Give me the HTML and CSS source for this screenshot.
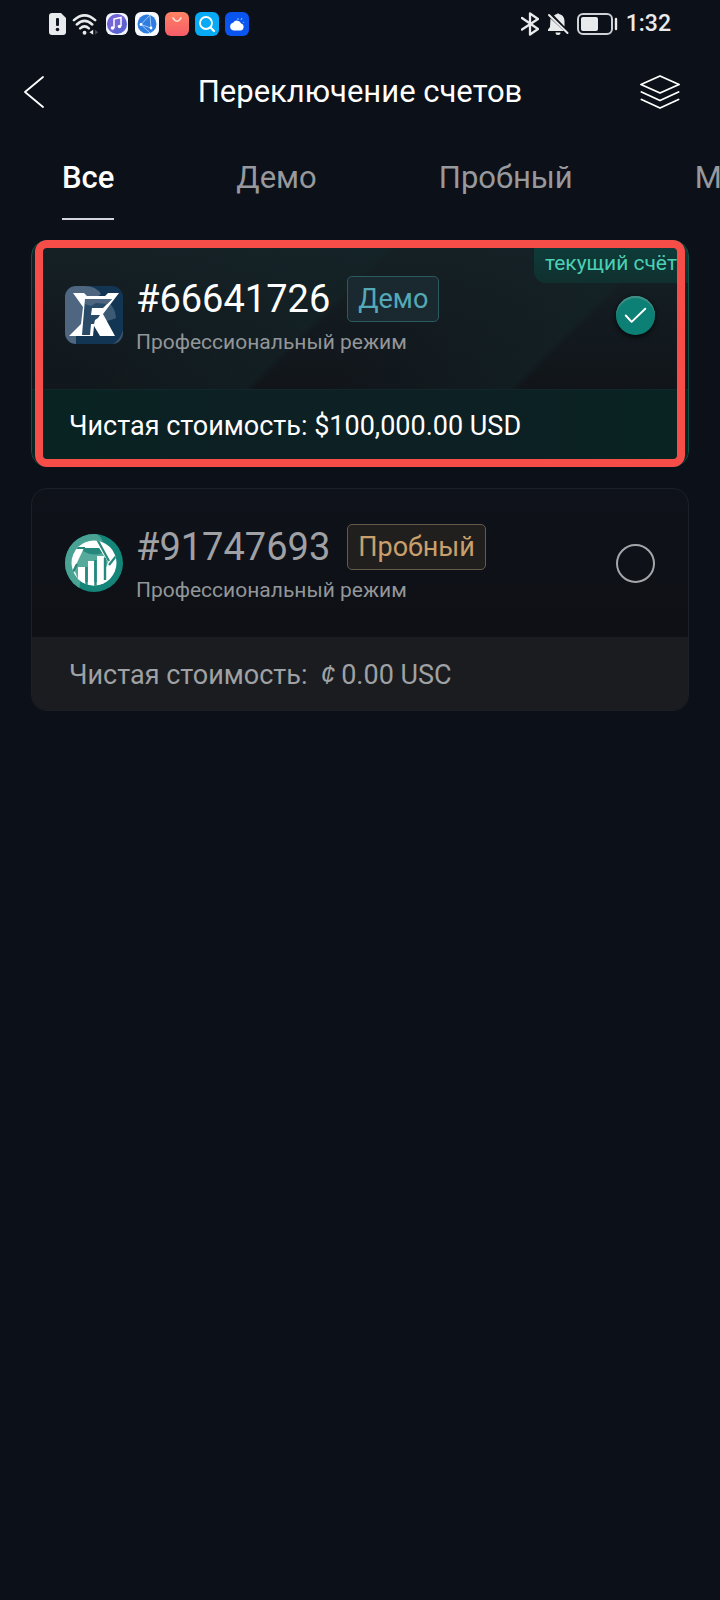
FILE: index.html
```html
<!DOCTYPE html>
<html lang="ru">
<head>
<meta charset="utf-8">
<meta name="viewport" content="width=device-width, initial-scale=1">
<title>Переключение счетов</title>
<link rel="stylesheet" href="styles.css">
</head>
<body>
<div class="status">
  <div class="status-apps">
    <svg width="17" height="22" viewBox="0 0 17 22"><path d="M3 0h9l5 5v14a3 3 0 0 1-3 3H3a3 3 0 0 1-3-3V3a3 3 0 0 1 3-3z" fill="#e9eaec"/><rect x="7" y="5" width="3" height="8" rx="1" fill="#111520"/><circle cx="8.500" cy="16.500" r="1.800" fill="#111520"/></svg>
    <svg class="wifi" width="27" height="23" viewBox="0 0 28 23" fill="none" stroke="#e9eaec" stroke-width="2.600" stroke-linecap="round"><path d="M2 7Q13-3 24 7M5 11.500q8-7.500 16 0M8.500 15.500q4.500-4 9 0"/><circle cx="13" cy="20" r="2" fill="#e9eaec" stroke="none"/><path d="M22 17v5l-4-2.500z" fill="#e9eaec" stroke="none"/><path d="M24 17v5l3-2.500z" fill="#4a4d55" stroke="none"/></svg>
    <svg width="24" height="24" viewBox="0 0 24 24"><rect x="1" y="1" width="22" height="22" rx="6" fill="#f3f4fc"/><circle cx="12" cy="12" r="10" fill="#5b63d3"/><path d="M3 9a10 10 0 0 1 17-3L8 20a9 9 0 0 1-5-11z" fill="#8068d8" opacity=".7"/><path d="M9 16V7l7-1.500V14" fill="none" stroke="#fff" stroke-width="1.500"/><circle cx="7.500" cy="16" r="1.800" fill="#fff"/><circle cx="14.500" cy="14.500" r="1.800" fill="#fff"/></svg>
    <svg width="24" height="24" viewBox="0 0 24 24"><rect width="24" height="24" rx="6" fill="#f7fbff"/><circle cx="12" cy="12" r="9.500" fill="#2f7de0"/><path d="M15 3 6 12.500 15 21M6 12.500l10 3.500M15 3l1 13" fill="none" stroke="#a5cdfb" stroke-width=".9"/><circle cx="6" cy="12.500" r="1.400" fill="#fff"/><circle cx="16" cy="16" r="1.400" fill="#fff"/></svg>
    <svg width="24" height="24" viewBox="0 0 24 24"><defs><linearGradient id="bag" x1="0" y1="0" x2="0" y2="1"><stop stop-color="#ff8363"/><stop offset="1" stop-color="#f65c68"/></linearGradient></defs><rect width="24" height="24" rx="6" fill="url(#bag)"/><path d="M8 6q4 6.500 8 0" fill="none" stroke="#ffe5dd" stroke-width="1.500" stroke-linecap="round"/></svg>
    <svg width="24" height="24" viewBox="0 0 24 24"><rect width="24" height="24" rx="6" fill="#08aaf5"/><circle cx="11" cy="11" r="6" fill="none" stroke="#fff" stroke-width="1.800"/><path d="m15.500 15.500 3.500 3.500" stroke="#fff" stroke-width="2.200" stroke-linecap="round"/></svg>
    <svg width="24" height="24" viewBox="0 0 24 24"><rect width="24" height="24" rx="6" fill="#0a54ef"/><path d="M8.500 18.500a4 4 0 0 1-.4-7.800 4.500 4.500 0 0 1 8 .8 3.600 3.600 0 0 1-.6 7z" fill="#fff"/><path d="M13 6v2M17 6l-1 2M19 10l-1 .5" stroke="#77b6ff" stroke-width="1.200"/></svg>
  </div>
  <div class="status-system">
    <svg width="18" height="24" viewBox="0 0 18 24" fill="none" stroke="#e9eaec" stroke-width="2.300" stroke-linejoin="round" stroke-linecap="round"><path d="M1 6l16 11-8 5.500V1.500L17 7 1 17.500"/></svg>
    <svg width="22" height="22" viewBox="0 0 22 22" fill="#e9eaec"><path d="M7 2.500A7 7 0 0 1 10 1q1-1.500 2 0c4 1 5.500 3.500 5.500 7.500v5zM3.500 5.500 17 18H1v-1.500l2-2.500z"/><path d="M8.500 19.500h5a2.500 2.500 0 0 1-5 0z"/><path d="m2 2 18.500 18" stroke="#e9eaec" stroke-width="2" stroke-linecap="round"/></svg>
    <svg width="41" height="22" viewBox="0 0 41 22"><rect x="1" y="1" width="34" height="20" rx="5" fill="none" stroke="#cfd1d4" stroke-width="2"/><rect x="4" y="4" width="17" height="14" rx="2" fill="#e9eaec"/><path d="M39 6v10" stroke="#e9eaec" stroke-width="2.400" stroke-linecap="round"/></svg>
    <span class="clock">1:32</span>
  </div>
</div>

<header class="topbar">
  <button class="icon-button" type="button" aria-label="Назад"><svg width="20" height="32" viewBox="0 0 20 32"><path d="M19 1 1 16l18 15" fill="none" stroke="#fff" stroke-width="1.800" stroke-linecap="round" stroke-linejoin="round"/></svg></button>
  <h1 class="title">Переключение счетов</h1>
  <button class="icon-button icon-button-end" type="button" aria-label="Счета"><svg width="40" height="34" viewBox="0 0 40 34" fill="none" stroke="#fff" stroke-width="1.900" stroke-linejoin="round" stroke-linecap="round"><path d="M1 9.500 20 1l19 8.500L20 18zM1.500 17 20 25.500 38.500 17M1.500 24.500 20 33l18.500-8.500"/></svg></button>
</header>

<nav class="tabs">
  <button class="tab tab-active" type="button">Все</button>
  <button class="tab" type="button">Демо</button>
  <button class="tab" type="button">Пробный</button>
  <button class="tab" type="button">М</button>
</nav>

<main class="accounts">
  <label class="card card-current" for="account-demo">
    <span class="card-head">
      <svg class="avatar" viewBox="0 0 58 58"><defs><clipPath id="tile"><rect width="58" height="58" rx="11"/></clipPath></defs><g clip-path="url(#tile)"><rect width="58" height="58" fill="#123553"/><path d="M0 0h20q11 0 16 8-13 8-15 24-1 13-10 18v8H0z" fill="#4e6680"/><path d="M20 12q24-3 30 14l1 6q-12 6-31 2z" fill="#3d5a75"/><path d="M58 44v14H48q7-4 10-14z" fill="#3b536b"/></g><path d="M8 7h11l3 3h18l3-3h11L38 28l12 22H4l12-12 2-17z" fill="#fff"/><path d="M20 13h27l-9 9H27l-1 7h9l-2 3-3 2-1 4h-3l-1 11h-8z" fill="#294b68"/><path d="M20 13h27l-5 5-11-1-5 3-6-2z" fill="#4e6680"/><path d="m29 40 6 10h-7z" fill="#123553"/></svg>
      <span class="info">
        <span class="line"><span class="number">#66641726</span><span class="badge badge-demo">Демо</span></span>
        <span class="mode">Профессиональный режим</span>
      </span>
      <span class="choice"><input class="radio" type="radio" name="account" id="account-demo" checked><svg class="tick" viewBox="0 0 40 40"><path d="m10 20 6 6.500L30 13" fill="none" stroke="#fff" stroke-width="2" stroke-linecap="round" stroke-linejoin="round"/></svg></span>
    </span>
    <span class="card-foot">Чистая стоимость: $100,000.00 USD</span>
    <span class="ribbon">текущий счёт</span>
    <span class="highlight"></span>
  </label>

  <label class="card" for="account-trial">
    <span class="card-head">
      <svg class="avatar" viewBox="0 0 58 58"><defs><clipPath id="disc"><circle cx="29" cy="29" r="29"/></clipPath><clipPath id="shutter"><circle cx="29" cy="29" r="22.500"/></clipPath></defs><g clip-path="url(#disc)"><rect width="58" height="58" fill="#148578"/><path d="M0 0h32q4 3 6 7Q18 13 14 58H0z" fill="#49a394"/></g><g clip-path="url(#shutter)"><rect x="6" y="6" width="46" height="46" fill="#fff"/><path d="M19 14h15l9 14-7 20H14l-5-13z" fill="#55aa9c"/><path d="M19 14h15l3 5q-9 4-19-2z" fill="#26887c"/><path d="m32 5 12 22M6 14h14M52 21l-8 10M12 30l-4 8" fill="none" stroke="#26887c" stroke-width="2.200"/><path d="M13 33h7v20h-7zM23 27h6v26h-6zM32 22h7v31h-7z" fill="#fff"/><path d="M21.500 33v19M30.500 26v26M40 24v22" stroke="#26887c" stroke-width="2.400"/></g></svg>
      <span class="info">
        <span class="line"><span class="number">#91747693</span><span class="badge badge-trial">Пробный</span></span>
        <span class="mode">Профессиональный режим</span>
      </span>
      <span class="choice"><input class="radio" type="radio" name="account" id="account-trial"><svg class="tick" viewBox="0 0 40 40"><path d="m10 20 6 6.500L30 13" fill="none" stroke="#fff" stroke-width="2" stroke-linecap="round" stroke-linejoin="round"/></svg></span>
    </span>
    <span class="card-foot">Чистая стоимость: <span class="cent">¢</span>0.00 USC</span>
  </label>
</main>
</body>
</html>
```
FILE: styles.css
```css
* {
  box-sizing: border-box;
}

body {
  margin: 0;
  min-height: 100vh;
  background: #0c1018;
  color: #fff;
  font-family: Roboto, "Noto Sans", sans-serif;
  overflow-x: hidden;
}

button {
  margin: 0;
  padding: 0;
  border: 0;
  background: none;
  color: inherit;
  font: inherit;
}

svg {
  display: block;
  flex: none;
}

.status {
  display: flex;
  align-items: center;
  justify-content: space-between;
  height: 48px;
  padding: 0 49px;
}

.status-apps {
  display: flex;
  align-items: center;
  gap: 6px;
}

.status-system {
  display: flex;
  align-items: center;
  gap: 8px;
}

.clock {
  color: #e9eaec;
  font-size: 23px;
  font-weight: 500;
  line-height: 28px;
}

.topbar {
  display: grid;
  grid-template-columns: 1fr auto 1fr;
  align-items: center;
  height: 88px;
  padding: 0 40px 0 24px;
}

.icon-button {
  display: flex;
  justify-self: start;
}

.icon-button-end {
  justify-self: end;
}

.title {
  margin: 0;
  padding-left: 16px;
  font-size: 31px;
  font-weight: 400;
  line-height: 40px;
}

.tabs {
  display: flex;
  gap: 122px;
  padding: 22px 0 0 62px;
  overflow: hidden;
}

.tab {
  flex: none;
  height: 62px;
  padding-bottom: 20px;
  border-bottom: 2px solid transparent;
  color: #97999d;
  font-size: 31px;
  line-height: 40px;
}

.tab-active {
  border-color: #d4d5dc;
  color: #fff;
  font-weight: 500;
}

.accounts {
  display: flex;
  flex-direction: column;
  gap: 21px;
  padding: 20px 31px;
}

.card {
  position: relative;
  display: block;
  border: 1px solid #1c2026;
  border-radius: 16px;
  background: linear-gradient(#0e121a, #0e0f12);
  color: #9fa1a4;
}

.card-current {
  border-color: #115048;
  background:
    linear-gradient(135deg, #13262900 0 10%, #13262977 41%, #0000 42% 50%, #13262977 71%, #0000 72%),
    linear-gradient(#152126, #11151a 65%);
  color: #fff;
}

.card-head {
  display: flex;
  align-items: center;
  height: 148px;
  padding: 0 33px;
}

.avatar {
  width: 58px;
  height: 58px;
  margin-right: 13px;
}

.info {
  display: flex;
  flex: 1;
  flex-direction: column;
  gap: 8px;
}

.line {
  display: flex;
  align-items: center;
  gap: 17px;
}

.number {
  font-size: 38px;
  line-height: 46px;
}

.badge {
  padding: 0 10px;
  border: 1px solid;
  border-radius: 5px;
  font-size: 27px;
  line-height: 44px;
}

.badge-demo {
  border-color: #2b5a60;
  background: #1a2930;
  color: #54a9b7;
}

.badge-trial {
  border-color: #675a49;
  background: #211f1e;
  color: #c9a06c;
}

.mode {
  color: #929699;
  font-size: 21px;
  line-height: 24px;
}

.choice {
  display: grid;
}

.radio,
.tick {
  grid-area: 1 / 1;
  width: 39px;
  height: 39px;
}

.radio {
  margin: 0;
  border: 2px solid #a5a6aa;
  border-radius: 50%;
  appearance: none;
}

.radio:checked {
  border: 0;
  background: #0d8075;
  box-shadow: inset 0 2px 1px #459087, 0 2px 5px #05070a;
}

.tick {
  visibility: hidden;
  z-index: 1;
  pointer-events: none;
}

.radio:checked + .tick {
  visibility: visible;
}

.card-foot {
  display: block;
  padding: 18px 37px 15px;
  border-radius: 0 0 15px 15px;
  background: #1a1c1f;
  font-size: 27px;
  line-height: 40px;
}

.card-current .card-foot {
  padding: 16px 37px 20px;
  border-top: 1px solid #10282a;
  background: linear-gradient(90deg, #082422, #0d2024 30%, #0d2024 70%, #082422);
}

.cent {
  display: inline-block;
  width: 27px;
  font-family: "Liberation Sans", sans-serif;
  font-style: italic;
  line-height: 32px;
  text-align: center;
}

.ribbon {
  position: absolute;
  top: 0;
  right: 0;
  padding: 9px 11px 7px;
  border-radius: 0 15px 0 12px;
  background: linear-gradient(#0d3d3b, #10302f);
  color: #4bd0b4;
  font-size: 21px;
  line-height: 26px;
}

.highlight {
  position: absolute;
  inset: -1px 3px;
  border: 8px solid #f64d48;
  border-radius: 12px;
  pointer-events: none;
}
```
